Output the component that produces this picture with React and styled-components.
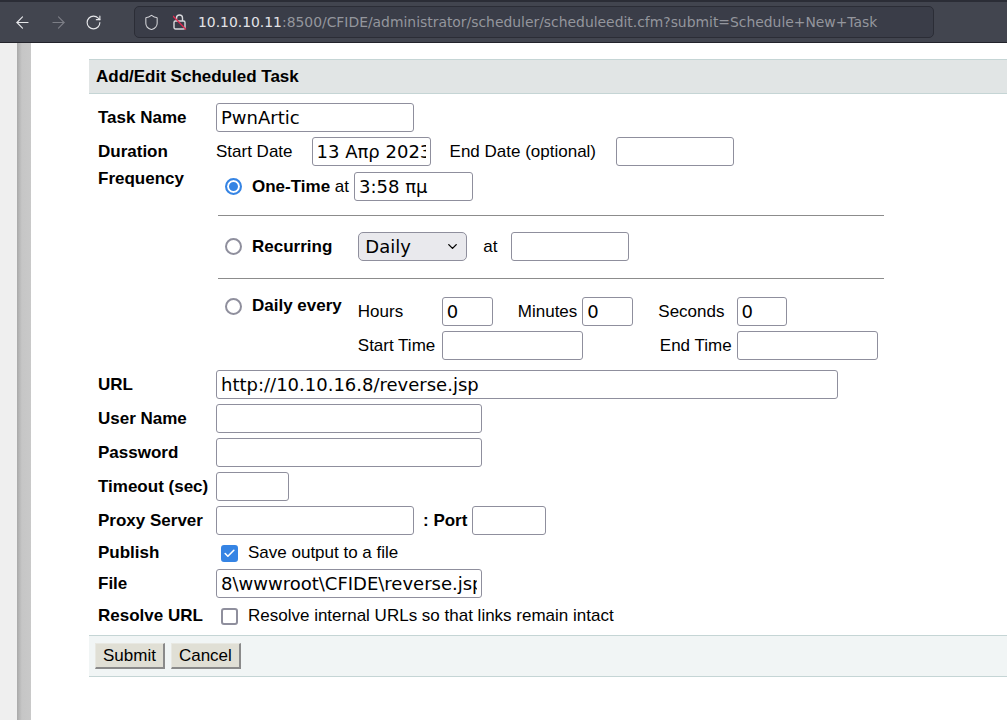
import React from "react";
import styled, { createGlobalStyle } from "styled-components";
import { ArrowLeft, ArrowRight, RotateCw, Shield, ChevronDown, Check } from "lucide-react";

const Global = createGlobalStyle`
  html, body { margin: 0; padding: 0; background: #fff; overflow: hidden; }
  body { font-family: "Liberation Sans", Arial, sans-serif; font-size: 17px; color: #000; }
  * { box-sizing: border-box; }
`;

const Page = styled.div`width: 1007px; height: 720px; display: flex; flex-direction: column; overflow: hidden;`;
const Toolbar = styled.header`
  height: 43px; flex: none; display: flex; align-items: center; background: #42454f;
  border-top: 2px solid #2b2d36; border-bottom: 1px solid #22232b; padding-left: 13px; overflow: hidden;
`;
const NavButton = styled.span`
  width: 36px; height: 20px; display: flex; align-items: center; color: ${p => (p.$dim ? "#7c7e86" : "#e6e7ea")};
`;
const AddressBar = styled.div`
  margin-left: 13px; height: 32px; width: 800px; flex: none; display: flex; align-items: center; padding-left: 8px;
  background: #3a3d48; border: 1px solid #2b2d36; border-radius: 5px; color: #d2d3d7;
`;
const LockWrap = styled.span`margin-left: 13px; width: 14px; height: 18px; display: block;`;
const Url = styled.span`
  margin-left: 11px; font-family: "DejaVu Sans", sans-serif; font-size: 13.9px; white-space: nowrap; color: #94969d;
  b { font-weight: 400; color: #e3e4e7; }
`;
const Main = styled.main`flex: 1; display: flex; min-height: 0;`;
const Gutter = styled.div`width: 17px; flex: none; background: #efefef;`;
const Rail = styled.div`width: 14px; flex: none; background: linear-gradient(90deg, #a9a9a9, #c6c6c6 35%, #c9c9c9);`;
const Content = styled.div`flex: 1; padding: 16px 0 0 58px; min-width: 0;`;
const Title = styled.h1`
  margin: 0; height: 35px; padding-left: 7px; display: flex; align-items: center; font-size: 17px; font-weight: 700;
  background: #e1e5e5; border-top: 1px solid #c5d5d5; border-bottom: 1px solid #c5d5d5;
`;
const Form = styled.form`display: flex; flex-direction: column; gap: 5px; padding: 9px 0 0 9px;`;
const Row = styled.div`display: flex; align-items: center; height: 29px;`;
const Label = styled.label`width: 118px; flex: none; font-weight: 700; white-space: nowrap;`;
const Input = styled.input`
  width: ${p => p.$w}px; height: 29px; flex: none; margin-left: ${p => p.$ml || 0}px; padding: 0 4px;
  font-family: "DejaVu Sans", sans-serif; font-size: 18px; color: #000; background: #fff;
  border: 1px solid #8f8f9d; border-radius: 3px; outline: none;
`;
const Text = styled.span`margin-left: ${p => p.$ml || 0}px; white-space: nowrap; flex: none;`;
const StrongText = styled(Text)`font-weight: 700;`;
const Frequency = styled.div`display: flex; margin-top: -2px;`;
const FrequencyLabel = styled(Label)`margin-top: 0; line-height: 20px;`;
const Options = styled.div`display: flex; flex-direction: column; width: 668px; margin-left: 0;`;
const OptionRow = styled.div`display: flex; align-items: center; height: 29px; padding-left: 9px; margin-top: 3px;`;
const Radio = styled.span`
  width: 17px; height: 17px; flex: none; border-radius: 50%; background: #fff;
  border: ${p => (p.$on ? "2px solid #3584e4" : "2px solid #8f8f9d")};
  box-shadow: ${p => (p.$on ? "inset 0 0 0 2px #fff, inset 0 0 0 9px #3584e4" : "none")};
`;
const OptionText = styled.span`margin-left: 10px; white-space: nowrap;`;
const Divider = styled.hr`
  margin: ${p => p.$top}px 0 0 2px; width: 666px; height: 1px; border: 0; background: #8c8c8c; flex: none;
`;
const Select = styled.div`
  width: 109px; height: 29px; flex: none; margin-left: 26px; padding: 0 6px; display: flex; align-items: center; justify-content: space-between;
  font-family: "DejaVu Sans", sans-serif; font-size: 18px; background: #e9e9ed; border: 1px solid #8f8f9d; border-radius: 5px;
`;
const DailyBlock = styled.div`display: flex; padding-left: 9px; margin-top: 18px;`;
const DailyHead = styled.div`display: flex; align-items: center; height: 18px; margin-top: 0;`;
const DailyGrid = styled.div`display: flex; flex-direction: column; gap: 5px; margin-left: 16px;`;
const DailyRow = styled.div`display: flex; align-items: center; height: 29px;`;
const Fixed = styled.span`width: ${p => p.$w}px; flex: none; white-space: nowrap;`;
const Box = styled.span`
  width: 17px; height: 17px; flex: none; margin-left: ${p => p.$ml}px; display: flex; align-items: center; justify-content: center;
  border-radius: 3px; color: #fff; background: ${p => (p.$on ? "#3584e4" : "#fff")};
  border: 2px solid ${p => (p.$on ? "#3584e4" : "#8f8f9d")};
`;
const SlimRow = styled(Row)`height: ${p => p.$h}px;`;
const Footer = styled.div`
  margin-top: 6px; height: 42px; display: flex; align-items: center; gap: 6px; padding-left: 6px;
  background: #f1f5f5; border-top: 1px solid #c5d5d5; border-bottom: 1px solid #c5d5d5;
`;
const Button = styled.button`
  height: 26px; padding: 0 7px; font-family: "Liberation Sans", sans-serif; font-size: 17px; color: #000; background: #e0dfd5;
  border: 1px solid; border-color: #e8e8e2 #8a8a8a #8a8a8a #e8e8e2; border-width: 1px 2px 2px 1px; margin-top: 0;
`;

export default function App() {
  return (
    <Page>
      <Global />
      <Toolbar>
        <NavButton><ArrowLeft size={19} strokeWidth={1.4} /></NavButton>
        <NavButton $dim><ArrowRight size={19} strokeWidth={1.4} /></NavButton>
        <NavButton><RotateCw size={17} strokeWidth={1.6} /></NavButton>
        <AddressBar>
          <Shield size={17} strokeWidth={1.5} />
          <LockWrap>
            <svg width="14" height="18" viewBox="0 0 14 18" fill="none">
              <rect x="1" y="8" width="11" height="8" rx="1.5" stroke="#d8d9dc" strokeWidth="1.4" />
              <path d="M3.5 8V5a3 3 0 0 1 6 0v3" stroke="#d8d9dc" strokeWidth="1.4" />
              <path d="M0 3l13 13.5" stroke="#e22850" strokeWidth="1.3" />
            </svg>
          </LockWrap>
          <Url><b>10.10.10.11</b>:8500/CFIDE/administrator/scheduler/scheduleedit.cfm?submit=Schedule+New+Task</Url>
        </AddressBar>
      </Toolbar>
      <Main>
        <Gutter />
        <Rail />
        <Content>
          <Title>Add/Edit Scheduled Task</Title>
          <Form as="div">
            <Row><Label>Task Name</Label><Input $w={198} defaultValue="PwnArtic" /></Row>
            <Row>
              <Label>Duration</Label>
              <Text>Start Date</Text>
              <Input $ml={19} $w={119} defaultValue="13 Απρ 2023" />
              <Text $ml={19}>End Date (optional)</Text>
              <Input $ml={20} $w={118} />
            </Row>
            <Frequency>
              <FrequencyLabel>Frequency</FrequencyLabel>
              <Options>
                <OptionRow>
                  <Radio $on />
                  <OptionText><b>One-Time</b> at</OptionText>
                  <Input $ml={5} $w={119} defaultValue="3:58 πμ" />
                </OptionRow>
                <Divider $top={14} />
                <OptionRow style={{ marginTop: 16 }}>
                  <Radio />
                  <OptionText><b>Recurring</b></OptionText>
                  <Select>Daily<ChevronDown size={15} strokeWidth={2.2} /></Select>
                  <Text $ml={16}>at</Text>
                  <Input $ml={14} $w={118} />
                </OptionRow>
                <Divider $top={17} />
                <DailyBlock>
                  <DailyHead>
                    <Radio />
                    <OptionText><b>Daily every</b></OptionText>
                  </DailyHead>
                  <DailyGrid>
                    <DailyRow>
                      <Fixed $w={84}>Hours</Fixed><Input $w={51} defaultValue="0" />
                      <Text $ml={25}>Minutes</Text><Input $ml={5} $w={51} defaultValue="0" />
                      <Text $ml={25}>Seconds</Text><Input $ml={12} $w={50} defaultValue="0" />
                    </DailyRow>
                    <DailyRow>
                      <Fixed $w={84}>Start Time</Fixed><Input $w={141} />
                      <Text $ml={77}>End Time</Text><Input $ml={5} $w={141} />
                    </DailyRow>
                  </DailyGrid>
                </DailyBlock>
              </Options>
            </Frequency>
            <Row style={{ marginTop: 5 }}><Label>URL</Label><Input $w={622} defaultValue="http://10.10.16.8/reverse.jsp" /></Row>
            <Row><Label>User Name</Label><Input $w={266} /></Row>
            <Row><Label>Password</Label><Input $w={266} /></Row>
            <Row><Label>Timeout (sec)</Label><Input $w={73} /></Row>
            <Row>
              <Label>Proxy Server</Label><Input $w={198} />
              <StrongText $ml={9}>: Port</StrongText><Input $ml={5} $w={74} />
            </Row>
            <SlimRow $h={26} style={{ marginTop: 0 }}>
              <Label>Publish</Label>
              <Box $on $ml={5}><Check size={13} strokeWidth={3} /></Box>
              <Text $ml={10}>Save output to a file</Text>
            </SlimRow>
            <Row style={{ marginTop: -2 }}><Label>File</Label><Input $w={266} defaultValue={"8\\wwwroot\\CFIDE\\reverse.jsp"} /></Row>
            <SlimRow $h={26} style={{ marginTop: 0 }}>
              <Label>Resolve URL</Label>
              <Box $ml={5} />
              <Text $ml={10}>Resolve internal URLs so that links remain intact</Text>
            </SlimRow>
          </Form>
          <Footer>
            <Button type="button">Submit</Button>
            <Button type="button">Cancel</Button>
          </Footer>
        </Content>
      </Main>
    </Page>
  );
}
